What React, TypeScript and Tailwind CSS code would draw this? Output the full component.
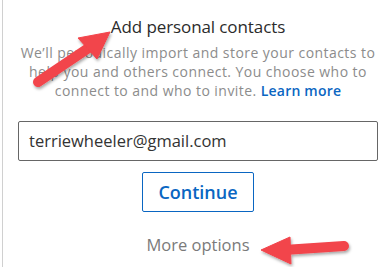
import React from "react";

export default function App() {
  return (
    <div className="relative w-[390px] h-[267px] overflow-hidden bg-white" style={{ fontFamily: '"Open Sans", "Noto Sans", sans-serif' }}>
      <div className="absolute left-[2px] top-0 h-full w-px bg-[#d0d0d0]" />
      <div className="flex flex-col items-center pl-[18px] pr-[12px] pt-[14px]">
        <div className="text-[17px] leading-[26px] text-[#2b2b2b] tracking-[-0.1px]">Add personal contacts</div>
        <p className="mt-[3px] w-[360px] text-center text-[14px] leading-[19px] text-[#8c8c8c] tracking-[0.45px]">
          We’ll periodically import and store your contacts to
          <br />
          help you and others connect. You choose who to
          <br />
          connect to and who to invite. <span className="font-semibold text-[#0a66c2] tracking-[0.2px]">Learn more</span>
        </p>
        <div className="mt-[21px] flex h-[40px] w-[360px] items-center rounded-[2px] border border-[#666] px-[10px] text-[16.5px] text-[#333]">
          terriewheeler@gmail.com
        </div>
        <div className="mt-[11px] flex h-[40px] w-[112px] items-center justify-center rounded-[2px] border border-[#0a66c2] text-[18px] font-semibold text-[#0a66c2]">
          Continue
        </div>
        <div className="mt-[21px] text-[16.5px] text-[#7a7a7a]">More options</div>
      </div>
      <svg className="pointer-events-none absolute left-0 top-0" width="390" height="267" viewBox="0 0 390 267">
        <defs>
          <filter id="sh" x="-20%" y="-20%" width="140%" height="140%">
            <feDropShadow dx="1" dy="2" stdDeviation="1.5" floodColor="#000" floodOpacity="0.35" />
          </filter>
        </defs>
        <g filter="url(#sh)" fill="#f2444b" stroke="#f2444b">
          <line x1="38" y1="82" x2="90" y2="47" strokeWidth="10" strokeLinecap="round" />
          <polygon points="110,32 78,38 97,59" strokeWidth="1" strokeLinejoin="round" />
          <line x1="284" y1="250" x2="344" y2="246" strokeWidth="10" strokeLinecap="round" />
          <polygon points="261,250 290,237 291,264" strokeWidth="1" strokeLinejoin="round" />
        </g>
      </svg>
    </div>
  );
}
